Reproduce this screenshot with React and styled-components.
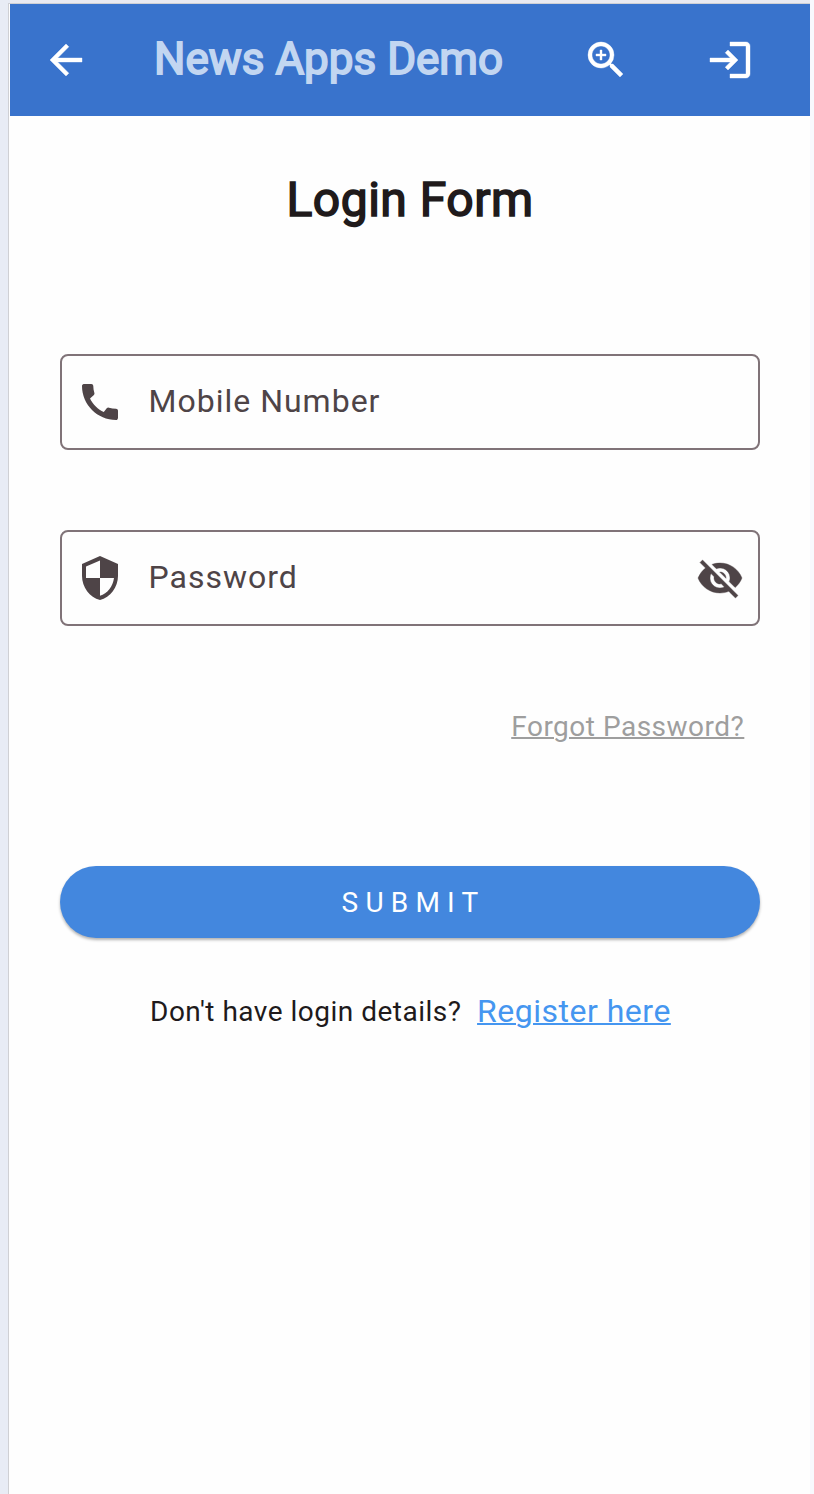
import React from "react";
import styled, { createGlobalStyle } from "styled-components";
import { MdArrowBack, MdZoomIn, MdLogin, MdCall, MdSecurity, MdVisibilityOff } from "react-icons/md";

const GlobalStyle = createGlobalStyle`
  * { box-sizing: border-box; }
  body { margin: 0; background: #e8ebf4; font-family: Roboto, "Liberation Sans", sans-serif; }
`;

const Page = styled.div`
  height: 1494px;
  padding: 3px 4px 0 8px;
  overflow: hidden;
  background: linear-gradient(to right, #e8ecf5 0 10px, #e9eaf1 10px 810px, #f8f9fd 810px);
`;

const Screen = styled.main`
  height: 1491px;
  border-top: 1px solid #cfd0d4;
  border-left: 1px solid #cfd0d4;
  padding-left: 1px;
  background: #fefefe;
`;

const AppBar = styled.header`
  display: flex;
  align-items: center;
  height: 112px;
  padding: 0 56px 0 32px;
  background: #3973cc;
  color: #fff;
`;

const IconButton = styled.button`
  display: flex;
  padding: 0;
  border: 0;
  background: none;
  color: inherit;
  font-size: 48px;
  margin-left: ${(p) => p.$gap || 0}px;

  path:not([fill="none"]) {
    stroke-width: 0.2px;
    stroke-linejoin: round;
  }
`;

const AppTitle = styled.h1`
  flex: 1;
  margin: 0 0 2px 64px;
  font-size: 44px;
  font-weight: 400;
  line-height: 56px;
  white-space: nowrap;
  color: #c2d6f1;
  -webkit-text-stroke: 1.8px #c2d6f1;
`;

const Form = styled.form`
  display: flex;
  flex-direction: column;
  padding: 52px 50px 0;
`;

const Heading = styled.h2`
  margin: 0 0 122px;
  text-align: center;
  font-size: 48px;
  font-weight: 400;
  line-height: 64px;
  color: #201a1b;
  letter-spacing: 0.5px;
  -webkit-text-stroke: 1.6px #201a1b;
`;

const Field = styled.label`
  display: flex;
  align-items: center;
  height: 96px;
  margin-bottom: 80px;
  padding: 0 14px;
  border: 2px solid #807378;
  border-radius: 8px;
  color: #4e4447;
  font-size: 48px;
`;

const Label = styled.span`
  flex: 1;
  margin: 0 0 2px 24.5px;
  font-size: 32px;
  line-height: 48px;
  letter-spacing: 1px;
`;

const ForgotLink = styled.a`
  align-self: flex-end;
  margin: 1px 15.7px 0 0;
  font-size: 28px;
  line-height: 40px;
  letter-spacing: 0.5px;
  color: #9e9e9e;
  text-decoration: underline;
  text-decoration-thickness: 1.5px;
`;

const SubmitButton = styled.button`
  height: 72px;
  margin-top: 119px;
  padding: 2px 0 0 7px;
  border: 0;
  border-radius: 36px;
  background: #4387de;
  box-shadow: 0 2px 3px rgba(0, 0, 0, 0.3);
  color: #fff;
  font: 400 28px/70px Roboto, "Liberation Sans", sans-serif;
  letter-spacing: 7.2px;
`;

const RegisterRow = styled.p`
  display: flex;
  align-items: center;
  margin: 49px 0 0 90px;
  line-height: 48px;
  font-size: 28px;
  letter-spacing: 0.5px;
  color: #201a1b;
  white-space: nowrap;
`;

const Prompt = styled.span`
  padding-top: 2px;
  line-height: 46px;
`;

const RegisterLink = styled.a`
  margin-left: 15.5px;
  font-size: 32px;
  letter-spacing: 0.5px;
  color: #4596f0;
  text-decoration: underline;
  text-decoration-thickness: 1.5px;
`;

export default function App() {
  return (
    <>
      <GlobalStyle />
      <Page>
        <Screen>
          <AppBar>
            <IconButton aria-label="Back"><MdArrowBack /></IconButton>
            <AppTitle>News Apps Demo</AppTitle>
            <IconButton aria-label="Zoom in"><MdZoomIn /></IconButton>
            <IconButton aria-label="Log in" $gap={76}><MdLogin /></IconButton>
          </AppBar>
          <Form onSubmit={(e) => e.preventDefault()}>
            <Heading>Login Form</Heading>
            <Field>
              <MdCall />
              <Label>Mobile Number</Label>
            </Field>
            <Field>
              <MdSecurity />
              <Label>Password</Label>
              <IconButton type="button" aria-label="Show password"><MdVisibilityOff /></IconButton>
            </Field>
            <ForgotLink>Forgot Password?</ForgotLink>
            <SubmitButton>SUBMIT</SubmitButton>
            <RegisterRow>
              <Prompt>Don't have login details?</Prompt>
              <RegisterLink>Register here</RegisterLink>
            </RegisterRow>
          </Form>
        </Screen>
      </Page>
    </>
  );
}
